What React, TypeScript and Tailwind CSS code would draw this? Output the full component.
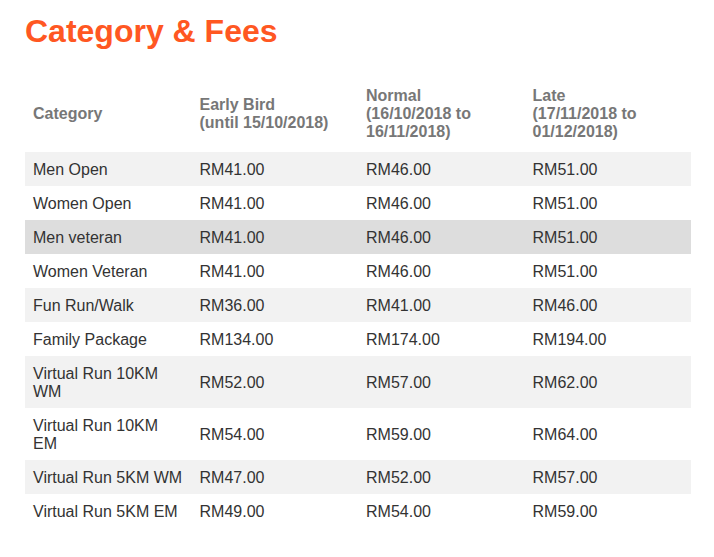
const ROWS: { name: string; early: string; normal: string; late: string; hover?: boolean }[] = [
  { name: "Men Open", early: "RM41.00", normal: "RM46.00", late: "RM51.00" },
  { name: "Women Open", early: "RM41.00", normal: "RM46.00", late: "RM51.00" },
  { name: "Men veteran", early: "RM41.00", normal: "RM46.00", late: "RM51.00", hover: true },
  { name: "Women Veteran", early: "RM41.00", normal: "RM46.00", late: "RM51.00" },
  { name: "Fun Run/Walk", early: "RM36.00", normal: "RM41.00", late: "RM46.00" },
  { name: "Family Package", early: "RM134.00", normal: "RM174.00", late: "RM194.00" },
  { name: "Virtual Run 10KM WM", early: "RM52.00", normal: "RM57.00", late: "RM62.00" },
  { name: "Virtual Run 10KM EM", early: "RM54.00", normal: "RM59.00", late: "RM64.00" },
  { name: "Virtual Run 5KM WM", early: "RM47.00", normal: "RM52.00", late: "RM57.00" },
  { name: "Virtual Run 5KM EM", early: "RM49.00", normal: "RM54.00", late: "RM59.00" },
];

export default function App() {
  return (
    <div className="min-h-screen bg-white pl-[25px] pr-[23px] pt-[13px] font-['Liberation_Sans',Arial,sans-serif]">
      {/* Title */}
      <h1 className="text-[32px] leading-[36px] font-bold text-[#ff5722]">Category &amp; Fees</h1>

      {/* Fees table */}
      <table className="mt-[25px] w-full table-fixed border-collapse text-[16px] leading-[18px]">
        <thead>
          <tr className="text-left font-bold text-[#777777] align-middle">
            <th className="px-2 pt-[13px] pb-[11px]">Category</th>
            <th className="px-2 pt-[13px] pb-[11px]">
              Early Bird
              <br />
              (until 15/10/2018)
            </th>
            <th className="px-2 pt-[13px] pb-[11px]">
              Normal
              <br />
              (16/10/2018 to 16/11/2018)
            </th>
            <th className="px-2 pt-[13px] pb-[11px]">
              Late
              <br />
              (17/11/2018 to 01/12/2018)
            </th>
          </tr>
        </thead>
        <tbody className="text-[#333333]">
          {ROWS.map((r, i) => (
            <tr
              key={r.name}
              className={r.hover ? "bg-[#dddddd]" : i % 2 === 0 ? "bg-[#f2f2f2]" : "bg-white"}
            >
              <td className="px-2 pt-[9px] pb-[7px] align-middle">{r.name}</td>
              <td className="px-2 pt-[9px] pb-[7px] align-middle">{r.early}</td>
              <td className="px-2 pt-[9px] pb-[7px] align-middle">{r.normal}</td>
              <td className="px-2 pt-[9px] pb-[7px] align-middle">{r.late}</td>
            </tr>
          ))}
        </tbody>
      </table>
    </div>
  );
}
